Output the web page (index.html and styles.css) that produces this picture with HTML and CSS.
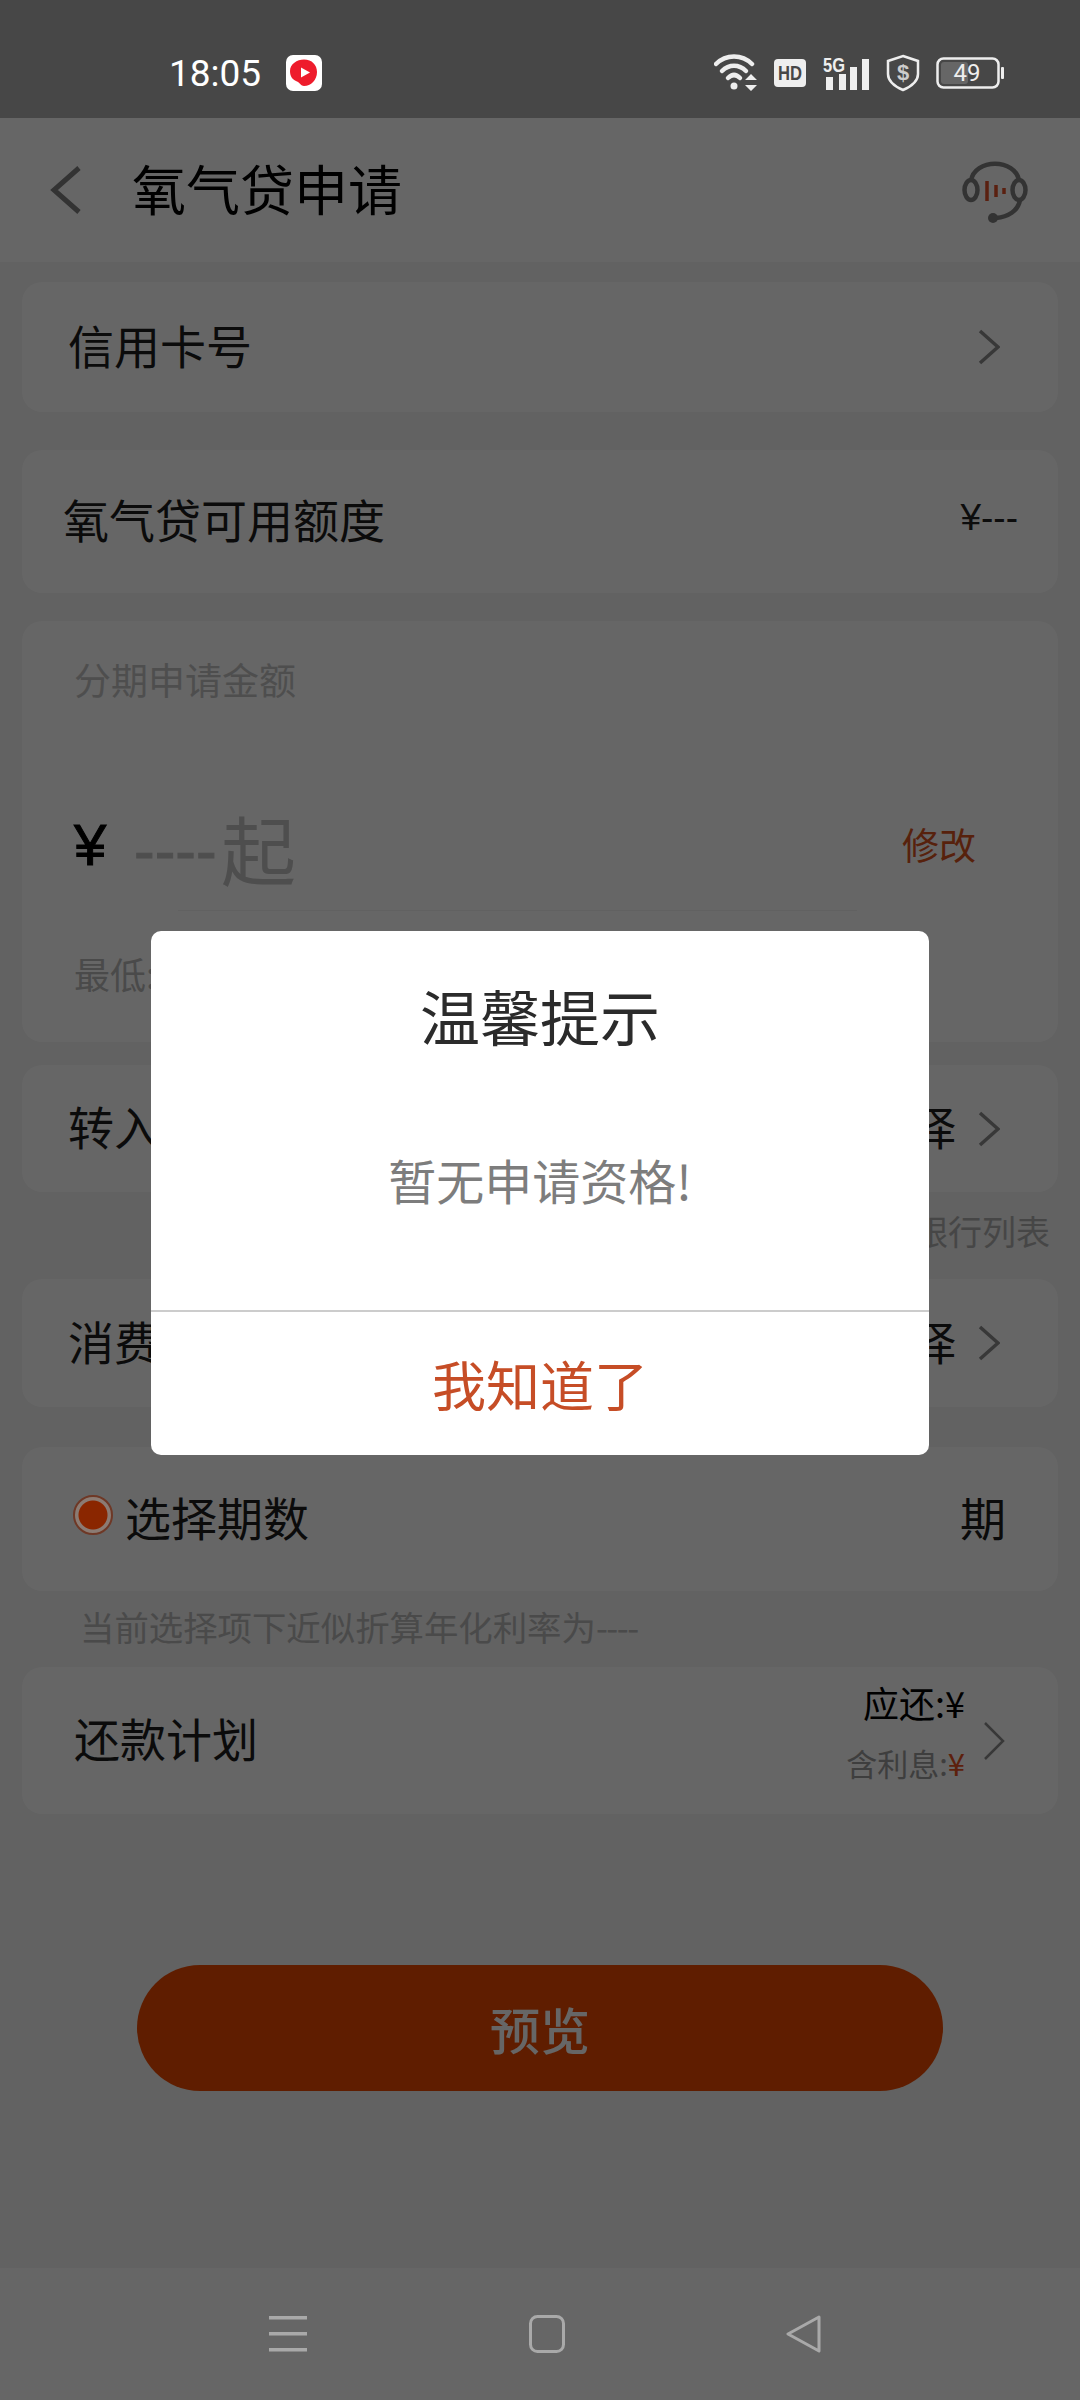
FILE: index.html
```html
<!DOCTYPE html>
<html lang="zh-CN">
<head>
  <meta charset="UTF-8">
  <title>氧气贷申请</title>
  <link rel="stylesheet" href="styles.css">
</head>
<body>
  <div class="phone">
    <div class="status-bar">
      <span class="clock">18:05</span>
      <svg class="app-badge" width="36" height="36" viewBox="0 0 36 36">
        <rect width="36" height="36" rx="7" fill="#fff"/>
        <path d="M18 4.500C26 4.500 31 10 31 17C31 25 25 31 18 31C15 31 14 28 11 26.500C7 25 4 22 4 16C4 9 11 4.500 18 4.500Z" fill="#ee1c2c"/>
        <path d="M15 12.500L24 17.500L15 22.500Z" fill="#fff"/>
      </svg>
      <div class="status-icons">
        <svg width="44" height="40" viewBox="0 0 44 40" fill="none" stroke="#eee" stroke-width="4.500" stroke-linecap="round">
          <path d="M2 11C12 1 28 1 38 11"/>
          <path d="M8 18C15 11 25 11 32 18"/>
          <path d="M14 25C18 21 22 21 26 25"/>
          <circle cx="20" cy="33" r="3.500" fill="#eee" stroke="none"/>
          <path d="M37 21L43 27H31ZM37 38L31 32H43Z" fill="#eee" stroke="none"/>
        </svg>
        <svg width="32" height="28" viewBox="0 0 32 28">
          <rect width="32" height="28" rx="4" fill="#eee"/>
          <text x="16" y="21" class="icon-text hd" textLength="24" lengthAdjust="spacingAndGlyphs">HD</text>
        </svg>
        <svg class="signal" width="48" height="45" viewBox="0 0 48 45">
          <text x="1" y="27" class="icon-text five-g" textLength="22" lengthAdjust="spacingAndGlyphs">5G</text>
          <rect x="4" y="32" width="7" height="13" fill="#eee"/>
          <rect x="17" y="29" width="7" height="16" fill="#eee"/>
          <rect x="28" y="22" width="7" height="23" fill="#eee"/>
          <rect x="40" y="14" width="7" height="31" fill="#eee"/>
        </svg>
        <svg width="34" height="38" viewBox="0 0 34 38">
          <path d="M17 2L32 7V20C32 28 24 33 17 36C10 33 2 28 2 20V7Z" fill="none" stroke="#eee" stroke-width="2.500"/>
          <text x="17" y="26" class="icon-text dollar">$</text>
        </svg>
        <svg class="battery" width="68" height="32" viewBox="0 0 68 32">
          <rect x="1.500" y="1.500" width="61" height="29" rx="6" fill="none" stroke="#eee" stroke-width="2.500"/>
          <rect x="5" y="5" width="27" height="22" rx="3" fill="#666"/>
          <rect x="65" y="10" width="3" height="12" rx="1" fill="#eee"/>
          <text x="31" y="24" class="icon-text level">49</text>
        </svg>
      </div>
    </div>

    <div class="page">
      <header class="top-bar">
        <svg class="back" width="32" height="48" viewBox="0 0 32 48" fill="none" stroke-width="5">
          <path d="M29 2L4 24L29 46"/>
        </svg>
        <h1>氧气贷申请</h1>
        <svg class="headset" width="66" height="64" viewBox="0 0 66 64" fill="none" stroke="#808080" stroke-width="4.500">
          <path d="M9 20C12 -3 54 -3 57 20"/>
          <ellipse cx="9" cy="29" rx="6.500" ry="10"/>
          <ellipse cx="57" cy="29" rx="6.500" ry="10"/>
          <path d="M58 39C56 50 46 56 34 57"/>
          <circle cx="31" cy="57" r="5" fill="#808080" stroke="none"/>
          <path d="M25 20V40M34 24V36M42 27V33" stroke="#e2502a" stroke-width="3.500"/>
        </svg>
      </header>

      <div class="row card-link">
        <span>信用卡号</span>
        <svg class="chevron" width="22" height="36" viewBox="0 0 22 36"><path d="M2 2L20 18L2 34"/></svg>
      </div>

      <div class="row card-limit">
        <span>氧气贷可用额度</span>
        <span class="limit-value">¥---</span>
      </div>

      <section class="amount-card">
        <div class="amount-label">分期申请金额</div>
        <div class="amount-line">
          <span class="yen">¥</span>
          <span class="dashes">----</span><span class="amount-from">起</span>
          <span class="edit">修改</span>
        </div>
        <div class="amount-rule"></div>
        <div class="amount-min">最低:</div>
      </section>

      <div class="row card-bank">
        <span>转入银行卡</span>
        <span class="row-right">请选择<svg class="chevron" width="22" height="36" viewBox="0 0 22 36"><path d="M2 2L20 18L2 34"/></svg></span>
      </div>
      <div class="bank-note">支持银行列表</div>
      <div class="row card-usage">
        <span>消费用途</span>
        <span class="row-right">请选择<svg class="chevron" width="22" height="36" viewBox="0 0 22 36"><path d="M2 2L20 18L2 34"/></svg></span>
      </div>

      <div class="row card-term">
        <span class="term-label"><span class="radio"></span>选择期数</span>
        <span>期</span>
      </div>
      <div class="rate-note">当前选择项下近似折算年化利率为<span class="rate-dashes">----</span></div>

      <div class="row card-plan">
        <span>还款计划</span>
        <div class="plan-right">
          <div class="plan-sums">
            <div class="plan-due">应还:¥</div>
            <div class="plan-interest">含利息:<span class="accent">¥</span></div>
          </div>
          <svg class="chevron thin" width="22" height="40" viewBox="0 0 22 40"><path d="M2 2L20 20L2 38"/></svg>
        </div>
      </div>

      <button class="preview">预览</button>
    </div>

    <div class="nav-bar">
      <svg width="38" height="38" viewBox="0 0 38 38" fill="#a9a9a9">
        <rect y="1" width="38" height="3.500"/>
        <rect y="17" width="38" height="3.500"/>
        <rect y="33" width="38" height="3.500"/>
      </svg>
      <svg width="36" height="38" viewBox="0 0 36 38" fill="none" stroke="#a9a9a9" stroke-width="3">
        <rect x="1.500" y="1.500" width="33" height="35" rx="7"/>
      </svg>
      <svg width="36" height="38" viewBox="0 0 36 38" fill="none" stroke="#a9a9a9" stroke-width="3" stroke-linejoin="round">
        <path d="M33 2L2 19L33 36Z"/>
      </svg>
    </div>

    <div class="scrim"></div>

    <div class="dialog">
      <div class="dialog-title">温馨提示</div>
      <div class="dialog-text">暂无申请资格!</div>
      <div class="dialog-action">我知道了</div>
    </div>
  </div>
</body>
</html>
```

FILE: styles.css
```css
* {
  box-sizing: border-box;
}

body {
  margin: 0;
  font-family: "Noto Sans CJK SC", "Noto Sans", sans-serif;
  background-color: #666;
}

.phone {
  position: relative;
  width: 1080px;
  height: 2400px;
  overflow: hidden;
  display: flex;
  flex-direction: column;
}

/* status bar */
.status-bar {
  height: 118px;
  flex-shrink: 0;
  background-color: #474747;
  display: flex;
  align-items: center;
  padding: 28px 76px 0 169px;
  position: relative;
  z-index: 2;
}

.clock {
  font-family: Roboto, sans-serif;
  font-size: 37px;
  color: #fff;
}

.app-badge {
  margin-left: 25px;
}

.status-icons {
  margin-left: auto;
  display: flex;
  align-items: center;
  gap: 16px;
}

.signal {
  margin-top: -12px;
}

.icon-text {
  font-family: "Liberation Sans", sans-serif;
  font-weight: bold;
  text-anchor: middle;
}

.icon-text.hd {
  font-size: 20px;
  fill: #474747;
}

.icon-text.five-g {
  font-size: 21px;
  fill: #eee;
  text-anchor: start;
}

.icon-text.dollar {
  font-size: 22px;
  fill: #ccc;
}

.icon-text.level {
  font-family: Roboto, sans-serif;
  font-weight: normal;
  font-size: 24px;
  fill: #eee;
}

/* page under the dialog */
.page {
  flex: 1;
  background-color: #f4f4f4;
  display: flex;
  flex-direction: column;
  color: #1c1c1c;
}

.top-bar {
  height: 144px;
  flex-shrink: 0;
  background-color: #fff;
  display: flex;
  align-items: center;
  padding: 0 52px 0 50px;
}

.back {
  stroke: #808080;
}

.top-bar h1 {
  margin: 0 0 6px 50px;
  font-size: 54px;
  font-weight: 400;
  color: #000;
}

.headset {
  margin-left: auto;
  margin-top: 6px;
}

.row {
  margin: 0 22px;
  padding: 0 58px 7px 46px;
  background-color: #fff;
  border-radius: 20px;
  display: flex;
  align-items: center;
  justify-content: space-between;
  font-size: 46px;
}

.chevron {
  margin-left: 22px;
  margin-top: 7px;
  fill: none;
  stroke: #8c8c8c;
  stroke-width: 3.500;
}

.chevron.thin {
  stroke-width: 2.500;
  margin-left: 18px;
}

.row-right {
  display: flex;
  align-items: center;
}

.card-link {
  height: 130px;
  margin-top: 20px;
}

.card-limit {
  height: 143px;
  margin-top: 38px;
  padding-left: 41px;
  padding-right: 40px;
}

.limit-value {
  font-family: "Liberation Sans", sans-serif;
  font-size: 37px;
  color: #222;
}

.amount-card {
  height: 421px;
  margin: 28px 22px 0;
  padding: 31px 82px 0 52px;
  background-color: #fff;
  border-radius: 20px;
}

.amount-label {
  font-size: 37px;
  color: #c4c4c4;
}

.amount-line {
  height: 130px;
  margin-top: 76px;
  display: flex;
  align-items: center;
}

.yen {
  width: 60px;
  margin-top: -6px;
  font-family: "Liberation Sans", sans-serif;
  font-size: 58px;
  color: #000;
  -webkit-text-stroke: 1px #000;
}

.dashes {
  flex: none;
  width: 87px;
  margin-top: 6px;
  white-space: nowrap;
  font-family: "Liberation Sans", sans-serif;
  font-size: 62px;
  color: #c4c4c4;
  -webkit-text-stroke: 1px #c4c4c4;
}

.amount-from {
  font-size: 75px;
  color: #c4c4c4;
}

.edit {
  margin-left: auto;
  margin-top: -6px;
  font-size: 37px;
  color: #d9531e;
}

/* the rule only runs part of the card */
.amount-rule {
  width: 679px;
  margin: -2px 0 0 104px;
  border-bottom: 1px solid #f2f2f2;
}

.amount-min {
  margin-top: 36px;
  font-size: 36px;
  color: #b8b8b8;
}

.card-bank {
  height: 127px;
  margin-top: 23px;
}

.bank-note {
  height: 87px;
  padding: 14px 30px 0 0;
  text-align: right;
  font-size: 34px;
  color: #b0b0b0;
}

.card-usage {
  height: 128px;
}

.card-term {
  height: 144px;
  margin-top: 40px;
  padding-left: 51px;
  padding-right: 52px;
}

.term-label {
  display: flex;
  align-items: center;
}

/* sits over the scrim, its ring stays lighter than the dimmed card */
.radio {
  position: relative;
  z-index: 2;
  width: 40px;
  height: 40px;
  margin: -2px 12px 0 0;
  border: 2px solid #6e3826;
  border-radius: 50%;
  background: radial-gradient(circle, #8a2600 14px, #8b7b73 15px);
}

.rate-note {
  height: 76px;
  padding: 10px 0 0 80px;
  font-size: 34.400px;
  color: #b8b8b8;
}

.rate-dashes {
  letter-spacing: -1.500px;
}

.card-plan {
  height: 147px;
  padding: 0 53px 7px 52px;
}

.plan-right {
  display: flex;
  align-items: center;
}

.plan-sums {
  margin-top: -14px;
  text-align: right;
}

.plan-due {
  font-size: 36px;
  color: #000;
}

.plan-interest {
  margin-top: 12px;
  font-size: 31px;
  color: #9c9c9c;
}

.accent {
  color: #e8501e;
}

.preview {
  width: 806px;
  height: 126px;
  margin: 151px auto 0;
  border: none;
  border-radius: 63px;
  background-color: #ed4a00;
  color: #fff;
  font-family: inherit;
  font-size: 50px;
  font-weight: 500;
  padding: 0;
}

/* bottom navigation */
.nav-bar {
  height: 132px;
  flex-shrink: 0;
  background-color: #666;
  display: flex;
  align-items: center;
  justify-content: space-between;
  padding: 0 258px 0 269px;
  position: relative;
  z-index: 2;
}

/* modal */
.scrim {
  position: absolute;
  inset: 0;
  z-index: 1;
  background-color: rgba(0, 0, 0, 0.6);
}

.dialog {
  position: absolute;
  top: 931px;
  left: 151px;
  z-index: 3;
  width: 778px;
  height: 524px;
  background-color: #fff;
  border-radius: 10px;
  display: flex;
  flex-direction: column;
  text-align: center;
}

.dialog-title {
  margin-top: 40px;
  font-size: 60px;
  color: #2b2b2b;
}

.dialog-text {
  margin-top: 86px;
  height: 166px;
  font-size: 48px;
  color: #7d7d7d;
}

.dialog-action {
  flex: 1;
  display: flex;
  align-items: center;
  justify-content: center;
  border-top: 2px solid #ccc;
  font-size: 54px;
  color: #c64d26;
}
```
